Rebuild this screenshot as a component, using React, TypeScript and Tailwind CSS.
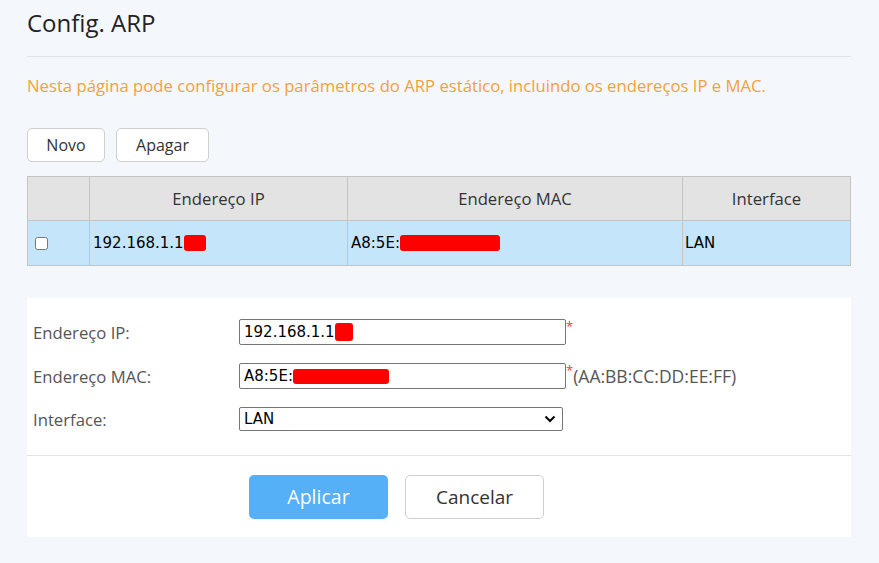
const font = { fontFamily: '"Open Sans", "Noto Sans", sans-serif' }
const mono = { fontFamily: '"DejaVu Sans", sans-serif' }

function Redact({ w, h = 16 }: { w: number; h?: number }) {
  return <span className="inline-block bg-[#ff0000] rounded-[3px] align-middle" style={{ width: w, height: h }} />
}

export default function App() {
  return (
    <div className="w-[879px] h-[563px] bg-[#f4f7fc] overflow-hidden text-[#333]" style={font}>
      <div className="px-[27px] pr-[28px]">
        {/* Header */}
        <h1 className="pt-[5px] h-[57px] text-[24px] text-[#222] border-b border-[#e0e3e8]">Config. ARP</h1>
        <p className="mt-[16px] text-[16.7px] text-[#f2a23a]">
          Nesta página pode configurar os parâmetros do ARP estático, incluindo os endereços IP e MAC.
        </p>

        {/* Buttons */}
        <div className="flex gap-[11px] mt-[30px]">
          <button className="w-[78px] h-[34px] bg-white border border-[#cfcfcf] rounded-[5px] text-[16px] text-[#333]">Novo</button>
          <button className="w-[93px] h-[34px] bg-white border border-[#cfcfcf] rounded-[5px] text-[16px] text-[#333]">Apagar</button>
        </div>

        {/* Table */}
        <table className="mt-[14px] w-full border-collapse border border-[#c4c4c4] text-[16.7px]">
          <thead>
            <tr className="bg-[#e3e3e3] h-[44px] text-[#333]">
              <th className="w-[62px] border border-[#c4c4c4] font-normal"></th>
              <th className="w-[258px] border border-[#c4c4c4] font-normal">Endereço IP</th>
              <th className="w-[335px] border border-[#c4c4c4] font-normal">Endereço MAC</th>
              <th className="border border-[#c4c4c4] font-normal">Interface</th>
            </tr>
          </thead>
          <tbody>
            <tr className="bg-[#c5e5fb] h-[45px] text-black text-[15px]" style={mono}>
              <td className="border border-[#c4c4c4] pl-[7px]">
                <input type="checkbox" className="w-[13px] h-[13px] align-middle" />
              </td>
              <td className="border border-[#c4c4c4] pl-[3px]">
                192.168.1.1<Redact w={22} />
              </td>
              <td className="border border-[#c4c4c4] pl-[3px]">
                A8:5E:<Redact w={100} />
              </td>
              <td className="border border-[#c4c4c4] pl-[2px]">LAN</td>
            </tr>
          </tbody>
        </table>

        {/* Form */}
        <div className="mt-[32px] bg-white h-[239px]">
          <div className="pt-[21px] pl-[6px] flex flex-col gap-[18px] text-[16.7px] text-[#555] h-[157px]">
            <div className="flex items-center h-[26px]">
              <label className="w-[206px]">Endereço IP:</label>
              <div className="w-[327px] h-[26px] border border-[#767676] rounded-[2px] px-[4px] flex items-center text-black text-[15px]" style={mono}>
                192.168.1.1<Redact w={18} h={18} />
              </div>
              <span className="text-[#ff3030] text-[13px] self-start -mt-[2px]">*</span>
            </div>
            <div className="flex items-center h-[26px]">
              <label className="w-[206px]">Endereço MAC:</label>
              <div className="w-[327px] h-[26px] border border-[#767676] rounded-[2px] px-[4px] flex items-center text-black text-[15px]" style={mono}>
                A8:5E:<Redact w={96} h={15} />
              </div>
              <span className="text-[#ff3030] text-[13px] self-start -mt-[2px]">*</span>
              <span className="text-[#555] text-[17.5px]">(AA:BB:CC:DD:EE:FF)</span>
            </div>
            <div className="flex items-center h-[24px]">
              <label className="w-[206px]">Interface:</label>
              <div className="w-[324px] h-[24px] border border-[#767676] rounded-[2px] px-[4px] flex items-center justify-between text-black text-[15px]" style={mono}>
                LAN
                <svg width="12" height="8" viewBox="0 0 12 8" className="mr-[2px]">
                  <path d="M1.5 1.5 L6 6 L10.5 1.5" fill="none" stroke="#000" strokeWidth="2" />
                </svg>
              </div>
            </div>
          </div>
          <div className="border-t border-[#e4e4e4] flex gap-[17px] pl-[222px] pt-[19px]">
            <button className="w-[139px] h-[44px] bg-[#56b0f8] rounded-[5px] text-white text-[19.5px]">Aplicar</button>
            <button className="w-[139px] h-[44px] bg-white border border-[#cfcfcf] rounded-[5px] text-[#333] text-[19px]">Cancelar</button>
          </div>
        </div>
      </div>
    </div>
  )
}
